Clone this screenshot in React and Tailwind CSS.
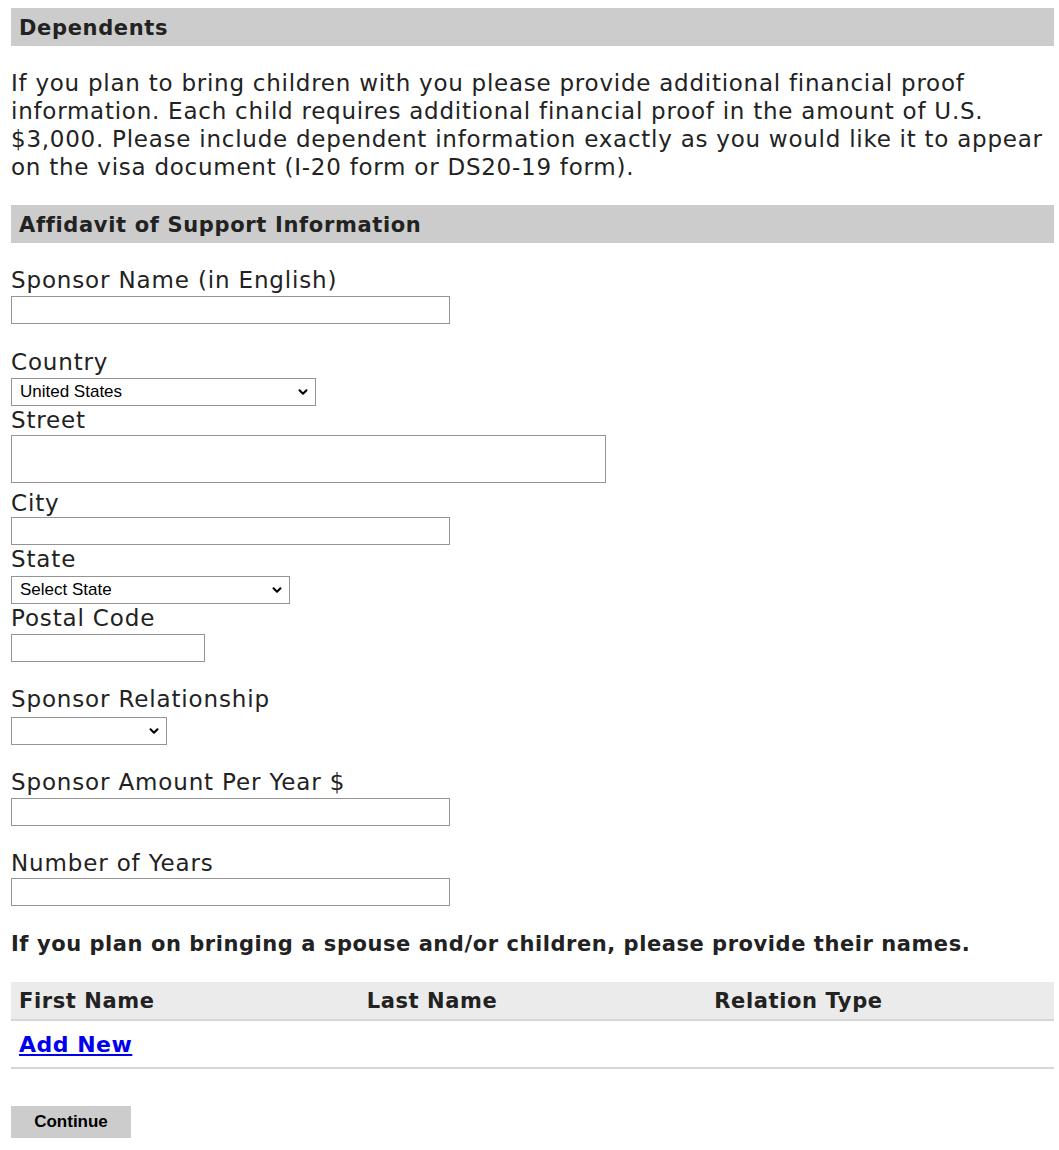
import { ChevronDown } from 'lucide-react';

const font = "font-['DejaVu_Sans',sans-serif]";

const SectionBar = ({ children, className = '' }) => (
    <div className={`h-[38px] bg-[#cccccc] pl-2 pt-[3px] flex items-center font-bold text-[21px] tracking-[0.65px] text-[#222] ${className}`}>
        {children}
    </div>
);

const Label = ({ children, className = '' }) => (
    <div className={`text-[23px] leading-[28px] tracking-[0.85px] text-[#222] ${className}`}>{children}</div>
);

const TextInput = ({ width, className = '' }) => (
    <input type="text" className={`block h-[28px] border border-[#949494] bg-white outline-none ${width} ${className}`} />
);

const Select = ({ width, value, className = '' }) => (
    <div className={`relative h-[28px] ${width} ${className}`}>
        <div className="h-full border border-[#949494] bg-white flex items-center pl-2 text-[17px] text-black font-['Liberation_Sans',Arial,sans-serif]">
            {value}
        </div>
        <ChevronDown className="absolute right-[6px] top-[7px] w-[14px] h-[14px] text-black" strokeWidth={3.5} />
    </div>
);

export default function App() {
    return (
        <div className={`${font} bg-white min-h-[1150px] pl-[11px] pr-[5px] pt-2 text-[#222]`}>
            <SectionBar>Dependents</SectionBar>

            <p className="mt-[23px] text-[23px] leading-[28px] tracking-[0.75px] text-[#222] whitespace-nowrap">
                If you plan to bring children with you please provide additional financial proof<br />
                information. Each child requires additional financial proof in the amount of U.S.<br />
                $3,000. Please include dependent information exactly as you would like it to appear<br />
                on the visa document (I-20 form or DS20-19 form).
            </p>

            <SectionBar className="mt-[24px]">Affidavit of Support Information</SectionBar>

            <Label className="mt-[23px]">Sponsor Name (in English)</Label>
            <TextInput width="w-[439px]" className="mt-[2px]" />

            <Label className="mt-[24px]">Country</Label>
            <Select width="w-[305px]" value="United States" className="mt-[2px]" />

            <Label>Street</Label>
            <textarea className="block mt-[1px] w-[595px] h-[48px] border border-[#949494] bg-white resize-none outline-none" />

            <Label className="mt-[6px]">City</Label>
            <TextInput width="w-[439px]" />

            <Label>State</Label>
            <Select width="w-[279px]" value="Select State" className="mt-[3px] h-[27px]" />

            <Label>Postal Code</Label>
            <TextInput width="w-[194px]" className="mt-[2px]" />

            <Label className="mt-[23px]">Sponsor Relationship</Label>
            <Select width="w-[156px]" value="" className="mt-[4px] h-[27px]" />

            <Label className="mt-[23px]">Sponsor Amount Per Year $</Label>
            <TextInput width="w-[439px]" className="mt-[2px]" />

            <Label className="mt-[23px]">Number of Years</Label>
            <TextInput width="w-[439px]" className="mt-[1px]" />

            <div className="mt-[24px] text-[21px] leading-[28px] tracking-[0.55px] font-bold text-[#222]">
                If you plan on bringing a spouse and/or children, please provide their names.
            </div>

            <div className="mt-[24px]">
                <div className="grid grid-cols-3 h-[39px] pt-[3px] bg-[#ebebeb] border-b-2 border-[#d6d6d6] items-center font-bold text-[21px] tracking-[0.6px] text-[#222]">
                    <div className="pl-2">First Name</div>
                    <div className="pl-2">Last Name</div>
                    <div className="pl-2">Relation Type</div>
                </div>
                <div className="h-[48px] flex items-center pl-2 border-b-2 border-[#d6d6d6]">
                    <a href="#" className="text-[#0000ee] underline font-bold text-[22px] tracking-[0.5px]">Add New</a>
                </div>
            </div>

            <button className="mt-[37px] w-[120px] h-[32px] bg-[#cccccc] text-black font-bold text-[17px] font-['Liberation_Sans',Arial,sans-serif]">
                Continue
            </button>
        </div>
    );
}
